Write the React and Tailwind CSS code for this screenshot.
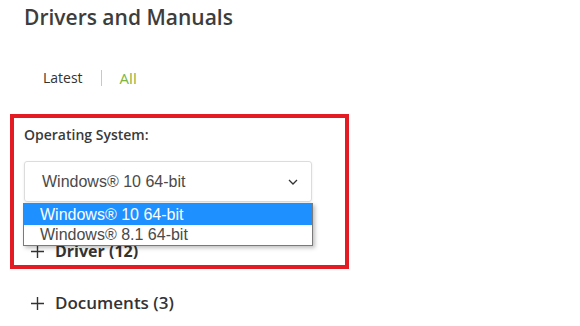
import React from "react";

function Plus() {
  return (
    <svg width="15" height="15" viewBox="0 0 15 15" className="shrink-0">
      <path d="M7.5 1v13M1 7.5h13" stroke="#333" strokeWidth="1.4" fill="none" />
    </svg>
  );
}

function Chevron() {
  return (
    <svg width="10" height="6" viewBox="0 0 10 6">
      <path d="M1 1l4 4 4-4" stroke="#333" strokeWidth="1.3" fill="none" />
    </svg>
  );
}

export default function App() {
  return (
    <div className="w-[580px] h-[326px] bg-white overflow-hidden font-['Open_Sans',sans-serif] text-[#333]">
      <h1 className="pl-[24px] pt-[2px] h-[33px] text-[21px] leading-[30px] font-semibold text-[#3d3d3d]">
        Drivers and Manuals
      </h1>
      <div className="mt-[35px] h-[20px] flex items-center pl-[43px] text-[14px] leading-[20px]">
        <span className="text-[#333]">Latest</span>
        <span className="ml-[18px] mr-[18px] w-px h-[16px] bg-[#c8c8c8]" />
        <span className="text-[#80b43f] text-[15px]">All</span>
      </div>
      <div className="relative ml-[10px] mt-[26px] w-[339px] h-[155px] border-[4px] border-[#e41b23]">
        <div className="ml-[10px] mt-[7px] h-[20px] text-[14px] leading-[20px] font-semibold text-[#3a3a3a]">
          Operating System:
        </div>
        <div className="ml-[10px] mt-[16px] w-[288px] h-[41px] border border-[#dcdcdc] rounded-[3px] shadow-[0_1px_3px_rgba(0,0,0,0.08)] flex items-center justify-between pl-[17px] pr-[13px] font-['Liberation_Sans',Arial,sans-serif] text-[16px] text-[#4a4a4a]">
          <span>Windows® 10 64-bit</span>
          <Chevron />
        </div>
        <div className="ml-[16px] mt-[39px] h-[20px] flex items-center gap-[10px] text-[16px] font-bold text-[#333]">
          <Plus />
          <span>Driver (12)</span>
        </div>
        <div className="absolute left-[9px] top-[85px] w-[290px] border border-[#7a7a7a] bg-white shadow-[2px_2px_4px_rgba(0,0,0,0.25)] font-['Liberation_Sans',Arial,sans-serif] text-[16px] leading-[20px]">
          <div className="h-[21px] pl-[16px] bg-[#1e90ff] text-white flex items-center">Windows® 10 64-bit</div>
          <div className="h-[20px] pl-[16px] text-[#4a4a4a] flex items-center">Windows® 8.1 64-bit</div>
        </div>
      </div>
      <div className="ml-[30px] mt-[24px] h-[20px] flex items-center gap-[10px] text-[17px] font-semibold text-[#333]">
        <Plus />
        <span>Documents (3)</span>
      </div>
    </div>
  );
}
